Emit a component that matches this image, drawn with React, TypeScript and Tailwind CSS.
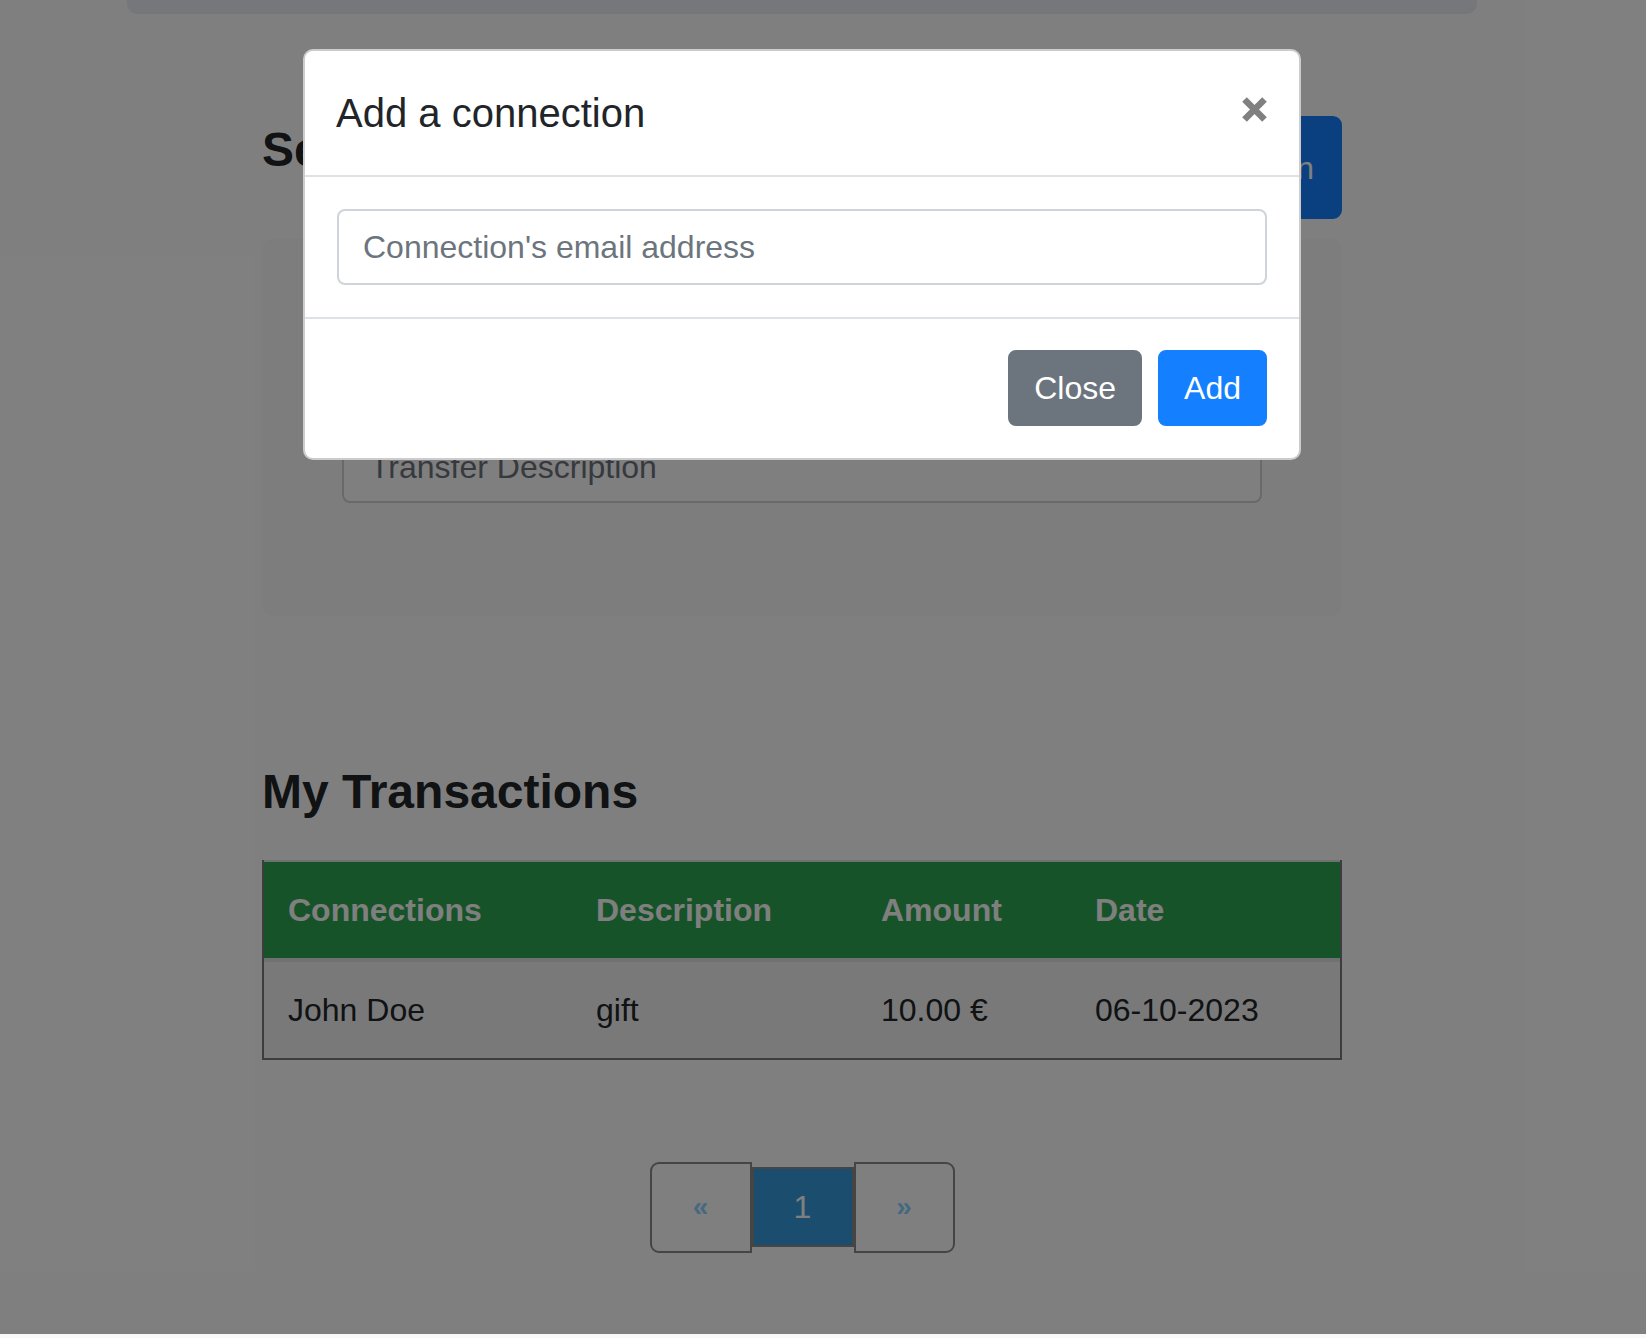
import React from "react";

const font = "font-['Liberation_Sans',Arial,Helvetica,sans-serif]";

function CloseX() {
  return (
    <svg width="27" height="27" viewBox="0 0 27 27" aria-hidden="true">
      <path d="M3.5 3.5 L23.5 23.5 M23.5 3.5 L3.5 23.5" stroke="#808080" strokeWidth="6.5" strokeLinecap="butt" fill="none" />
    </svg>
  );
}

export default function App() {
  return (
    <div className={`relative w-[1646px] h-[1338px] bg-[#f8f9fb] overflow-hidden ${font}`}>
      <div className="relative h-[1334px] bg-white">
        {/* Page underneath */}
        <div className="w-[1604px]">
          <div className="w-[1350px] h-[14px] mx-auto bg-[#eceef4] rounded-b-[10px]" />

          <div className="w-[1080px] mx-auto">
            <div className="mt-[102px] flex justify-between items-start">
              <h2 className="mt-[5px] text-[48px] leading-[1.2] font-bold text-[#212529]">Send Money</h2>
              <button className="h-[103px] px-[26px] flex items-center rounded-[9px] border-2 border-[#1580ff] bg-[#1580ff] text-white text-[32px] leading-[48px]">
                Add Connection
              </button>
            </div>

            <div className="mt-[20px] bg-[#fbfbfb] rounded-[10px] px-[80px] pt-[80px] pb-[113px]">
              <div className="flex gap-[24px] h-[76px]">
                <div className="flex-1 border-2 border-[#ced4da] rounded-[8px] bg-white px-[24px] flex items-center text-[32px] text-[#495057]">
                  Select A Connection
                </div>
                <div className="w-[300px] border-2 border-[#ced4da] rounded-[8px] bg-white px-[24px] flex items-center text-[32px] text-[#6c757d]">
                  0 €
                </div>
              </div>
              <input
                className="mt-[32px] block w-full h-[76px] border-2 border-[#ced4da] rounded-[8px] bg-white pl-[26px] pr-[24px] pt-[4px] text-[32px] text-[#495057] placeholder:text-[#6c757d] outline-none"
                placeholder="Transfer Description"
              />
            </div>

            <h3 className="mt-[147px] text-[48px] leading-[1.2] font-bold text-[#212529]">My Transactions</h3>

            <div className="mt-[39px] border-x-2 border-b-2 border-[#7a7a7a]">
              <div className="grid grid-cols-[308px_285px_214px_269px] bg-[#2fa650] border-t-2 border-b-4 border-[#dee2e6] text-white font-bold text-[32px] leading-[48px]">
                <div className="py-[24px] pl-[24px]">Connections</div>
                <div className="py-[24px] pl-[24px]">Description</div>
                <div className="py-[24px] pl-[24px]">Amount</div>
                <div className="py-[24px] pl-[24px]">Date</div>
              </div>
              <div className="grid grid-cols-[308px_285px_214px_269px] bg-[#f3f3f3] text-[#212529] text-[32px] leading-[48px]">
                <div className="py-[24px] pl-[24px]">John Doe</div>
                <div className="py-[24px] pl-[24px]">gift</div>
                <div className="py-[24px] pl-[24px]">10.00 €</div>
                <div className="py-[24px] pl-[24px]">06-10-2023</div>
              </div>
            </div>

            <div className="mt-[102px] flex justify-center items-center">
              <div className="w-[102px] h-[91px] border-2 border-[#8a8a8a] rounded-l-[9px] flex items-center justify-center text-[28px] text-[#8ad2ff] font-bold">
                «
              </div>
              <div className="w-[102px] h-[80px] border-2 border-[#8a8a8a] bg-[#369bdc] flex items-center justify-center text-[32px] text-white">
                1
              </div>
              <div className="w-[101px] h-[91px] border-2 border-[#8a8a8a] rounded-r-[9px] flex items-center justify-center text-[28px] text-[#8ad2ff] font-bold">
                »
              </div>
            </div>
          </div>
        </div>

        {/* Backdrop */}
        <div className="absolute inset-0 bg-black/50" />

        {/* Modal */}
        <div className="absolute left-[303px] top-[49px] w-[998px] bg-white border-2 border-black/20 rounded-[10px]">
          <div className="flex justify-between items-start pl-[31px] pr-[31px] pt-[32px] pb-[32px] border-b-2 border-[#dee2e6]">
            <h5 className="text-[40px] leading-[60px] text-[#212529]">Add a connection</h5>
            <button className="mt-[13px]" aria-label="Close">
              <CloseX />
            </button>
          </div>
          <div className="p-[32px]">
            <input
              className="block w-full h-[76px] border-2 border-[#ced4da] rounded-[8px] px-[24px] text-[32px] text-[#495057] placeholder:text-[#6c757d] outline-none"
              placeholder="Connection's email address"
            />
          </div>
          <div className="flex justify-end gap-[16px] border-t-2 border-[#dee2e6] pt-[31px] pb-[32px] pr-[32px]">
            <button className="h-[76px] px-[24px] rounded-[8px] border-2 border-[#6c757d] bg-[#6c757d] text-white text-[32px] leading-[48px]">
              Close
            </button>
            <button className="h-[76px] px-[24px] rounded-[8px] border-2 border-[#1580ff] bg-[#1580ff] text-white text-[32px] leading-[48px]">
              Add
            </button>
          </div>
        </div>
      </div>
    </div>
  );
}
